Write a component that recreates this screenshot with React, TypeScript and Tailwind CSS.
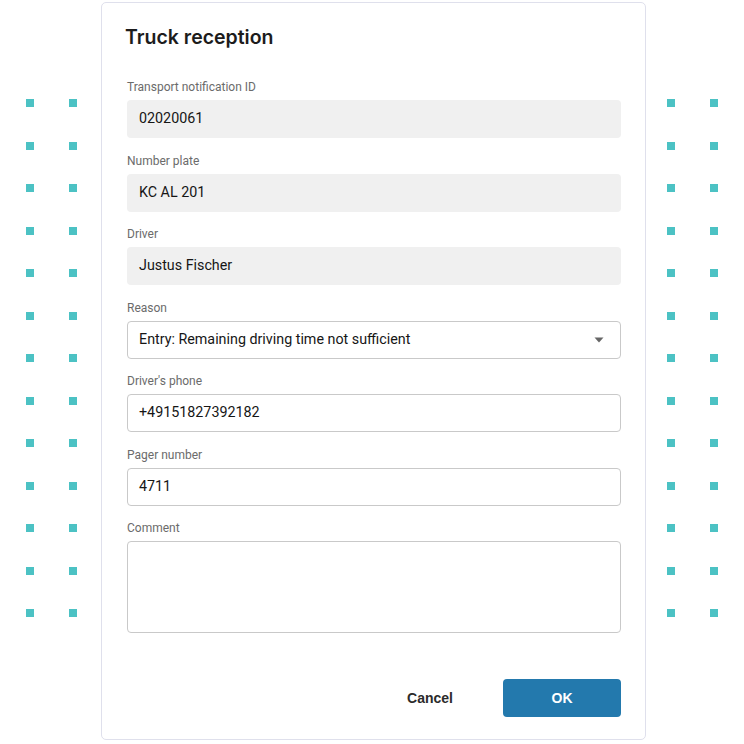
import React from "react";

const fields = [
  { label: "Transport notification ID", value: "02020061", kind: "readonly" },
  { label: "Number plate", value: "KC AL 201", kind: "readonly" },
  { label: "Driver", value: "Justus Fischer", kind: "readonly" },
  { label: "Reason", value: "Entry: Remaining driving time not sufficient", kind: "select" },
  { label: "Driver's phone", value: "+49151827392182", kind: "input" },
  { label: "Pager number", value: "4711", kind: "input" },
];

function Dots() {
  return (
    <div className="grid grid-cols-[8px_8px] content-start gap-x-[35px] gap-y-[34.5px] self-start pt-[99px]">
      {Array.from({ length: 26 }).map((_, i) => (
        <span key={i} className="block h-2 w-2 bg-[#4cc2c4]" />
      ))}
    </div>
  );
}

export default function App() {
  return (
    <div className="flex h-[744px] w-[744px] items-start bg-white pl-[26px] font-['Roboto',sans-serif]">
      <Dots />
      <div className="ml-6 mt-[2px] flex h-[738px] w-[545px] flex-col rounded-[5px] border border-[#dfe0ec] bg-white pb-[22px] pl-[25px] pr-6 pt-5">
        <h1 className="-ml-[2px] font-['Inter',sans-serif] text-[19.5px] font-semibold leading-[28px] text-[#1c1c1c]">
          Truck reception
        </h1>
        <div className="mt-[27px] flex flex-col gap-[13.5px]">
          {fields.map((f) => (
            <div key={f.label} className="flex flex-col gap-1">
              <label className="text-[12px] leading-[18px] text-[#6b6b6b]">{f.label}</label>
              {f.kind === "readonly" ? (
                <div className="flex h-[38px] items-center rounded bg-[#f0f0f0] px-3 text-[14.3px] text-[#161616]">
                  {f.value}
                </div>
              ) : (
                <div className="flex h-[38px] items-center justify-between rounded border border-[#c9c9c9] bg-white pl-[11px] pr-4 text-[14.3px] text-[#161616]">
                  <span>{f.value}</span>
                  {f.kind === "select" && (
                    <svg width="10" height="6" viewBox="0 0 10 6">
                      <path d="M0.5 0.5h9L5 5.5z" fill="#666" />
                    </svg>
                  )}
                </div>
              )}
            </div>
          ))}
          <div className="flex flex-col gap-1">
            <label className="text-[12px] leading-[18px] text-[#6b6b6b]">Comment</label>
            <div className="h-[92px] rounded border border-[#c9c9c9] bg-white" />
          </div>
        </div>
        <div className="mt-auto flex justify-end gap-[14px] font-['Liberation_Sans',Arial,sans-serif]">
          <button className="h-[38px] w-[118px] text-[14px] font-bold text-[#2b2b2b]">Cancel</button>
          <button className="h-[38px] w-[118px] rounded bg-[#2379ad] text-[14px] font-bold text-white">
            OK
          </button>
        </div>
      </div>
      <div className="ml-[21px] flex">
        <Dots />
      </div>
    </div>
  );
}
